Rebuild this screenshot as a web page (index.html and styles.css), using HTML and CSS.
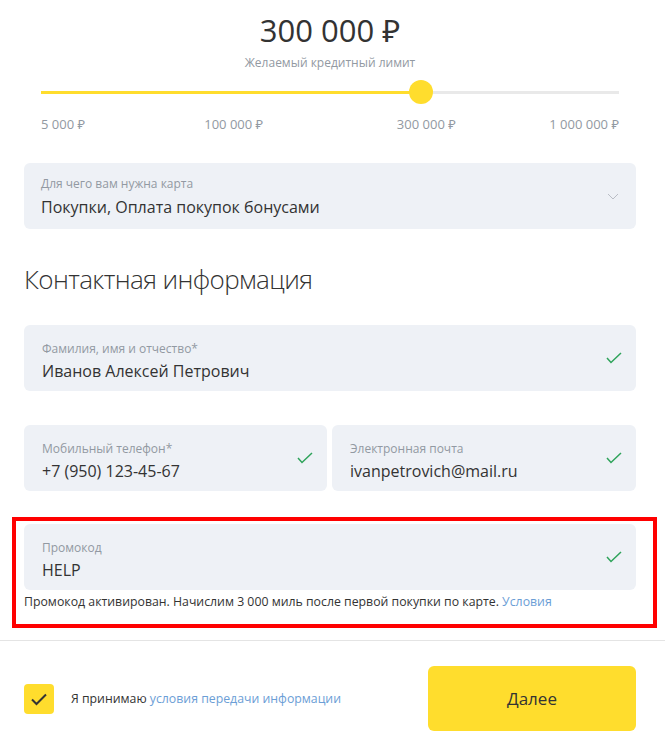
FILE: index.html
```html
<!DOCTYPE html>
<html lang="ru">
<head>
<meta charset="utf-8">
<title>Кредитная карта</title>
<link rel="stylesheet" href="styles.css">
</head>
<body>
<div class="page">
  <section class="limit">
    <div class="limit-value">300 000 ₽</div>
    <div class="limit-caption">Желаемый кредитный лимит</div>
    <div class="slider">
      <div class="track">
        <div class="fill" style="width: 65.7%"></div>
        <div class="knob" style="left: 65.7%"></div>
      </div>
    </div>
    <div class="ticks">
      <span class="tick tick-start">5 000 ₽</span>
      <span class="tick tick-mid1">100 000 ₽</span>
      <span class="tick tick-mid2">300 000 ₽</span>
      <span class="tick tick-end">1 000 000 ₽</span>
    </div>
  </section>

  <section class="content">
    <div class="field field-select">
      <div class="field-body">
        <div class="field-label">Для чего вам нужна карта</div>
        <div class="field-value">Покупки, Оплата покупок бонусами</div>
      </div>
      <svg class="chevron" width="12" height="7" viewBox="0 0 12 7"><path d="M1 1 L6 6 L11 1" fill="none" stroke="#b9bdc5" stroke-width="1"/></svg>
    </div>

    <h2 class="section-title">Контактная информация</h2>

    <div class="field">
      <div class="field-body">
        <div class="field-label">Фамилия, имя и отчество*</div>
        <div class="field-value">Иванов Алексей Петрович</div>
      </div>
      <svg class="check" width="16" height="12" viewBox="0 0 16 12"><path d="M1 6 L5 10.5 L15 1" fill="none" stroke="#2ea35a" stroke-width="1.5"/></svg>
    </div>

    <div class="field-row">
      <div class="field">
        <div class="field-body">
          <div class="field-label">Мобильный телефон*</div>
          <div class="field-value">+7 (950) 123-45-67</div>
        </div>
        <svg class="check" width="16" height="12" viewBox="0 0 16 12"><path d="M1 6 L5 10.5 L15 1" fill="none" stroke="#2ea35a" stroke-width="1.5"/></svg>
      </div>
      <div class="field">
        <div class="field-body">
          <div class="field-label">Электронная почта</div>
          <div class="field-value">ivanpetrovich@mail.ru</div>
        </div>
        <svg class="check" width="16" height="12" viewBox="0 0 16 12"><path d="M1 6 L5 10.5 L15 1" fill="none" stroke="#2ea35a" stroke-width="1.5"/></svg>
      </div>
    </div>

    <div class="promo-block">
      <div class="field">
        <div class="field-body">
          <div class="field-label">Промокод</div>
          <div class="field-value">HELP</div>
        </div>
        <svg class="check" width="16" height="12" viewBox="0 0 16 12"><path d="M1 6 L5 10.5 L15 1" fill="none" stroke="#2ea35a" stroke-width="1.5"/></svg>
      </div>
      <p class="promo-note">Промокод активирован. Начислим 3 000 миль после первой покупки по карте. <a class="link" href="#">Условия</a></p>
    </div>
  </section>

  <hr class="divider">

  <section class="footer">
    <label class="agree">
      <span class="checkbox">
        <svg width="30" height="30" viewBox="0 0 30 30"><path d="M8 15.5 L12.5 20 L22 10.5" fill="none" stroke="#333333" stroke-width="2"/></svg>
      </span>
      <span class="agree-text">Я принимаю <a class="link" href="#">условия передачи информации</a></span>
    </label>
    <button class="next" type="button">Далее</button>
  </section>
</div>
</body>
</html>
```

FILE: styles.css
```css
* { box-sizing: border-box; }

body {
  margin: 0;
  background: #ffffff;
  font-family: "Open Sans", "Noto Sans", "Liberation Sans", sans-serif;
  color: #333333;
}

.page {
  width: 665px;
}

.limit {
  padding: 0 46px 0 41px;
  text-align: center;
}

.limit-value {
  margin-top: 10px;
  font-size: 31px;
  line-height: 40px;
  color: #333333;
}

.limit-caption {
  margin-top: 4px;
  font-size: 12px;
  line-height: 18px;
  color: #9299a2;
}

.slider {
  margin-top: 8px;
  height: 24px;
  display: flex;
  align-items: center;
}

.track {
  position: relative;
  width: 100%;
  height: 3px;
  background: #e9e9e9;
}

.fill {
  height: 3px;
  background: #ffdd2d;
}

.knob {
  position: absolute;
  top: -10.5px;
  width: 24px;
  height: 24px;
  margin-left: -12px;
  border-radius: 50%;
  background: #ffdd2d;
}

.ticks {
  margin-top: 11px;
  display: grid;
  grid-template-columns: repeat(6, 1fr);
  font-size: 13px;
  line-height: 18px;
  color: #9299a2;
  white-space: nowrap;
}

.tick-start { grid-column: 1; justify-self: start; }
.tick-mid1 { grid-column: 2 / 4; justify-self: center; }
.tick-mid2 { grid-column: 4 / 6; justify-self: center; }
.tick-end { grid-column: 6; justify-self: end; }

.content {
  width: 612px;
  margin-left: 24px;
  padding-top: 30px;
}

.field {
  display: flex;
  align-items: center;
  height: 66px;
  padding: 0 14px 0 18px;
  border-radius: 6px;
  background: #eef1f6;
}

.field-body {
  flex: 1;
  min-width: 0;
  display: flex;
  flex-direction: column;
  gap: 3px;
  padding-top: 7px;
}

.field-label {
  font-size: 12px;
  line-height: 16px;
  color: #9299a2;
}

.field-value {
  font-size: 16px;
  line-height: 22px;
  color: #333333;
  white-space: nowrap;
}

.field-select {
  padding: 0 17px 0 17px;
}

.field-select .field-body {
  gap: 4px;
  padding-top: 2px;
}

.chevron {
  flex: none;
  display: block;
}

.check {
  flex: none;
  display: block;
}

.section-title {
  margin: 33px 0 29px;
  font-size: 26px;
  line-height: 34px;
  font-weight: 300;
  letter-spacing: -0.6px;
  color: #333333;
}

.field-row {
  margin-top: 34px;
  display: grid;
  grid-template-columns: 303px 304px;
  gap: 5px;
}

.promo-block {
  margin: 26px -21px 0 -12px;
  padding: 3px 17px 13px 8px;
  border: 4px solid #ff0000;
}

.promo-note {
  margin: 3px 0 0;
  font-size: 12.3px;
  line-height: 18px;
  color: #333333;
}

.link {
  color: #6b9ed6;
  text-decoration: none;
}

.divider {
  margin: 12px 0 0;
  border: 0;
  border-top: 1px solid #e4e4e4;
  height: 0;
}

.footer {
  width: 612px;
  margin-left: 24px;
  padding-top: 25px;
  display: flex;
  align-items: center;
  justify-content: space-between;
}

.agree {
  display: flex;
  align-items: center;
  gap: 17px;
}

.checkbox {
  width: 30px;
  height: 30px;
  border-radius: 4px;
  background: #ffdd2d;
  display: block;
}

.checkbox svg {
  display: block;
}

.agree-text {
  font-size: 12.3px;
  line-height: 18px;
  color: #333333;
}

.next {
  width: 208px;
  height: 65px;
  border: 0;
  border-radius: 6px;
  background: #ffdd2d;
  font-family: inherit;
  font-size: 17px;
  color: #333333;
  cursor: pointer;
}
```
